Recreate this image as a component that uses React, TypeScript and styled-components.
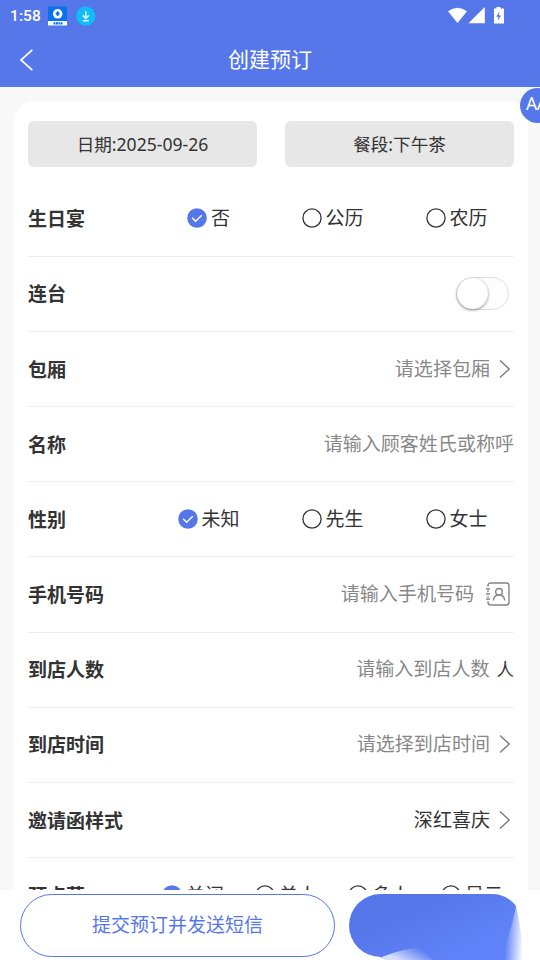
import React from "react";
import styled, { createGlobalStyle } from "styled-components";

const BLUE = "#5677e9";

const GlobalStyle = createGlobalStyle`
  * { box-sizing: border-box; }
  html, body { margin: 0; height: 100%; overflow: hidden; }
  body { font-family: "Noto Sans", "Noto Sans CJK SC", sans-serif; font-size: 19px; color: #333; background: #f8f8f8; }
`;

const Screen = styled.div`
  position: relative;
  width: 540px;
  height: 960px;
  display: flex;
  flex-direction: column;
  overflow: hidden;
`;
const Header = styled.header`
  flex: none;
  height: 87px;
  background: ${BLUE};
  color: #fff;
`;
const StatusBar = styled.div`
  height: 31px;
  padding: 0 35px 0 10px;
  display: flex;
  align-items: center;
  justify-content: space-between;
`;
const StatusGroup = styled.div`
  display: flex;
  align-items: center;
  svg { display: block; }
`;
const Clock = styled.span`
  width: 38px;
  padding-top: 1px;
  font: 500 15.5px/31px Roboto, sans-serif;
  letter-spacing: 0.1px;
`;
const TitleBar = styled.div`
  height: 56px;
  display: grid;
  grid-template-columns: 60px 1fr 60px;
  align-items: center;
`;
const BackButton = styled.button`
  border: 0;
  padding: 1px 0 0 18px;
  background: none;
  height: 56px;
  svg { display: block; }
`;
const Title = styled.h1`
  margin: 0;
  font-size: 21px;
  line-height: 56px;
  font-weight: 400;
  text-align: center;
`;
const Scroll = styled.main`
  height: 803px;
  flex: none;
  padding: 14px 12px 0 14px;
  overflow: hidden;
`;
const Card = styled.section`
  background: #fff;
  border-radius: 20px 20px 0 0;
  padding: 20px 14px 0;
`;
const Pickers = styled.div`
  display: grid;
  grid-template-columns: 1fr 1fr;
  gap: 28px;
  margin-bottom: 14.5px;
`;
const Picker = styled.button`
  height: 46px;
  border: 0;
  border-radius: 6px;
  padding: 0 0 1px;
  background: #e7e7e7;
  font: inherit;
  font-size: 17.6px;
  line-height: 44px;
  color: #333;
`;
const Row = styled.div`
  height: 75.18px;
  padding-bottom: 0.6px;
  display: flex;
  align-items: center;
  justify-content: space-between;
  border-bottom: 1px solid #eee;
`;
const Label = styled.span`
  width: 118px;
  flex: none;
  font-weight: 700;
  color: #333;
`;
const Options = styled.div<{ $cols: number }>`
  flex: 1;
  margin: 0 -4.6px 0 0.6px;
  display: grid;
  grid-template-columns: repeat(${(p) => p.$cols}, 1fr);
`;
const Option = styled.div`
  display: flex;
  align-items: center;
  justify-content: center;
  gap: 4px;
  white-space: nowrap;
  svg { display: block; flex: none; }
`;
const Text = styled.span`
  position: relative;
  top: -1px;
`;
const Value = styled.div<{ $muted?: boolean }>`
  display: flex;
  align-items: center;
  font-size: 19.05px;
  color: ${(p) => (p.$muted ? "#888" : "#333")};
  svg { display: block; }
`;
const Unit = styled.span`
  position: relative;
  top: -1px;
  margin-left: 7px;
  font-size: 17.5px;
  color: #333;
`;
const Track = styled.div`
  width: 53px;
  height: 33px;
  margin: 1px 5px 0 0;
  border: 1px solid #dfdfdf;
  border-radius: 17px;
  background: #fdfdfd;
`;
const Knob = styled.div`
  width: 31px;
  height: 31px;
  border-radius: 50%;
  background: #fff;
  box-shadow: 0 1px 3px rgba(0, 0, 0, 0.45);
`;
const Footer = styled.footer`
  flex: none;
  height: 70px;
  background: #fff;
  padding: 4px 20px 0;
  display: flex;
  gap: 14px;
`;
const SendButton = styled.button`
  width: 315px;
  height: 63px;
  flex: none;
  border: 1px solid ${BLUE};
  border-radius: 32px;
  padding: 0 0 4px;
  background: #fff;
  color: ${BLUE};
  font: inherit;
`;
const SubmitArt = styled.svg`
  display: block;
  flex: none;
`;
const FontBubble = styled.button`
  position: absolute;
  left: 520px;
  top: 88px;
  width: 35px;
  height: 35px;
  border: 0;
  border-radius: 50%;
  padding: 0 0 5px 6px;
  text-align: left;
  background: ${BLUE};
  color: #fff;
  font: 17.5px/30px "Noto Sans", sans-serif;
  letter-spacing: -0.5px;
`;

const Radio = ({ on }: { on?: boolean }) => (
  <svg width="20" height="20" viewBox="0 0 20 20" fill="none">
    {on ? (
      <>
        <circle cx="10" cy="10" r="9.8" fill={BLUE} />
        <path d="M5.2 9.8l3.4 3.5 6.2-6" stroke="#fff" strokeWidth="1.5" />
      </>
    ) : (
      <circle cx="10" cy="10" r="9.1" stroke="#333" strokeWidth="1.3" />
    )}
  </svg>
);

const Chevron = () => (
  <svg width="24" height="22" viewBox="0 0 24 22" fill="none">
    <path d="M10 2.5L19.2 11 10 19.5" stroke="#777" strokeWidth="1.3" />
  </svg>
);

const ContactIcon = () => (
  <svg width="40" height="26" viewBox="0 0 40 26" fill="none" stroke="#858585" strokeWidth="1.4">
    <path d="M14 5.8V4.7Q14 2 16.7 2h15.6Q35 2 35 4.7v16.6Q35 24 32.3 24H16.7Q14 24 14 21.3v-1.1M14 9.5v1.7M14 14.9v1.6" />
    <path d="M12 8h4M12 13h4M12 18h4" />
    <circle cx="25" cy="10.8" r="3.3" />
    <path d="M19.3 19.5c.3-3.6 2.7-5.5 5.7-5.5s5.4 1.9 5.7 5.5" />
  </svg>
);

const Choices = ({ items }: { items: string[] }) => (
  <Options $cols={items.length}>
    {items.map((t, i) => (
      <Option key={t}>
        <Radio on={i === 0} />
        <Text>{t}</Text>
      </Option>
    ))}
  </Options>
);

export default function App() {
  return (
    <Screen>
      <GlobalStyle />
      <Header>
        <StatusBar>
          <StatusGroup>
            <Clock>1:58</Clock>
            <svg width="50" height="20" viewBox="0 0 50 20">
              <rect y="0.5" width="19" height="19" fill="#0872ee" />
              <path d="M0 15h19v4.5H0z" fill="#fff" />
              <circle cx="9.7" cy="7.8" r="4.8" fill="#fff" />
              <path d="M9.7 5l2.2 2.6-2.2 3-2.2-3z" fill="#0872ee" />
              <path d="M5.5 17.3h9" stroke="#0872ee" strokeWidth="2.2" strokeDasharray="2 .5" />
              <circle cx="37.8" cy="10" r="9.6" fill="#0dbdfc" />
              <path d="M37.8 5v7M34.8 9.4l3 3 3-3M34.8 14.7h6" fill="none" stroke="#e9f4df" strokeWidth="1.5" />
            </svg>
          </StatusGroup>
          <svg width="57" height="18" viewBox="0 0 57 18" fill="#fff">
            <path d="M0 4.2Q9.5-2.8 19 4.2L9.5 16z" />
            <path d="M20.5 16.3L36.8 0v16.3z" />
            <path d="M46 1.5h2.5V0h4v1.5H56v15H46z" />
            <path d="M51.5 4.5l-3.3 5.2h2.3l-.8 4 3.4-5.2h-2.2z" fill={BLUE} />
          </svg>
        </StatusBar>
        <TitleBar>
          <BackButton aria-label="返回">
            <svg width="18" height="24" viewBox="0 0 18 24" fill="none">
              <path d="M14.3 1.8L3 12l11.3 10.2" stroke="#fff" strokeWidth="1.7" />
            </svg>
          </BackButton>
          <Title>创建预订</Title>
        </TitleBar>
      </Header>
      <Scroll>
        <Card>
          <Pickers>
            <Picker>日期:2025-09-26</Picker>
            <Picker>餐段:下午茶</Picker>
          </Pickers>
          <Row><Label>生日宴</Label><Choices items={["否", "公历", "农历"]} /></Row>
          <Row><Label>连台</Label><Track><Knob /></Track></Row>
          <Row><Label>包厢</Label><Value $muted><Text>请选择包厢</Text><Chevron /></Value></Row>
          <Row><Label>名称</Label><Value $muted><Text>请输入顾客姓氏或称呼</Text></Value></Row>
          <Row><Label>性别</Label><Choices items={["未知", "先生", "女士"]} /></Row>
          <Row><Label>手机号码</Label><Value $muted><Text>请输入手机号码</Text><ContactIcon /></Value></Row>
          <Row><Label>到店人数</Label><Value $muted><Text>请输入到店人数</Text><Unit>人</Unit></Value></Row>
          <Row><Label>到店时间</Label><Value $muted><Text>请选择到店时间</Text><Chevron /></Value></Row>
          <Row><Label>邀请函样式</Label><Value><Text>深红喜庆</Text><Chevron /></Value></Row>
          <Row><Label>预点菜</Label><Choices items={["关闭", "单人", "多人", "显示"]} /></Row>
        </Card>
      </Scroll>
      <Footer>
        <SendButton>提交预订并发送短信</SendButton>
        <SubmitArt width="176" height="66" viewBox="0 0 176 66">
          <defs>
            <linearGradient id="body" gradientUnits="userSpaceOnUse" x1="60" y1="0" x2="90" y2="66">
              <stop offset="0.2" stopColor="#5677e9" />
              <stop offset="1" stopColor="#5f82f8" />
            </linearGradient>
            <linearGradient id="edge" gradientUnits="userSpaceOnUse" x1="157" y1="36" x2="175" y2="37">
              <stop offset="0" stopColor="#fff" stopOpacity="0" />
              <stop offset="0.5" stopColor="#fff" stopOpacity="0.5" />
              <stop offset="1" stopColor="#fff" />
            </linearGradient>
            <linearGradient id="glow" gradientUnits="userSpaceOnUse" x1="56" y1="70" x2="66" y2="52">
              <stop offset="0" stopColor="#fff" stopOpacity="0.75" />
              <stop offset="1" stopColor="#fff" stopOpacity="0" />
            </linearGradient>
          </defs>
          <path d="M31.5 0H142Q158 0 167 12Q173 36 174 66H36L31.5 63A31.5 31.5 0 0 1 31.5 0z" fill="url(#body)" />
          <path d="M167 12L176 12V66H150Q162 40 167 12z" fill="url(#edge)" />
          <path d="M33 63Q55 54 71 54Q79 59 83 66H33z" fill="url(#glow)" />
        </SubmitArt>
      </Footer>
      <FontBubble>AA</FontBubble>
    </Screen>
  );
}
